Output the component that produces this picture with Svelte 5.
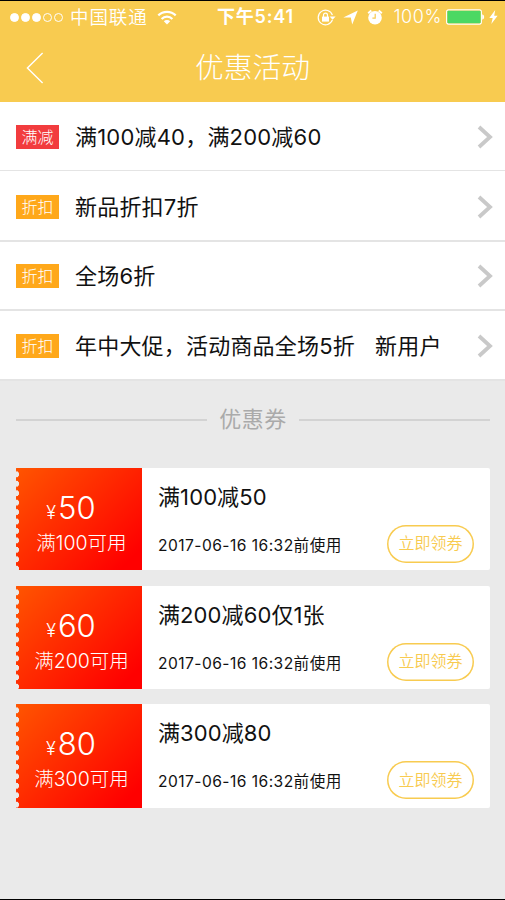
<script>
  // Promotions screen: active offers on top, claimable coupons below.
  const promotions = [
    { tag: '满减', kind: 'reduce', text: '满100减40，满200减60' },
    { tag: '折扣', kind: 'discount', text: '新品折扣7折' },
    { tag: '折扣', kind: 'discount', text: '全场6折' },
    { tag: '折扣', kind: 'discount', text: '年中大促，活动商品全场5折', extra: '新用户' },
  ];

  const coupons = [
    { amount: 50, condition: '满100可用', title: '满100减50', expires: '2017-06-16 16:32前使用' },
    { amount: 60, condition: '满200可用', title: '满200减60仅1张', expires: '2017-06-16 16:32前使用' },
    { amount: 80, condition: '满300可用', title: '满300减80', expires: '2017-06-16 16:32前使用' },
  ];

  const signal = [true, true, true, false, false];
</script>

<div class="screen">
  <header>
    <div class="status">
      <div class="side">
        <span class="signal">
          {#each signal as on}
            <i class:on></i>
          {/each}
        </span>
        <span class="carrier">中国联通</span>
        <svg class="wifi" width="20" height="15" viewBox="0 0 20 15" fill="none" stroke="#fff" stroke-width="2.2">
          <path d="M1.3 5.4a12.3 12.3 0 0 1 17.4 0" />
          <path d="M4.6 8.9a7.6 7.6 0 0 1 10.8 0" />
          <path d="M10 14.6l-3.2-3.3a4.6 4.6 0 0 1 6.4 0z" fill="#fff" stroke="none" />
        </svg>
      </div>
      <span class="time">下午5:41</span>
      <div class="side right">
        <svg width="19" height="17" viewBox="0 0 19 17" fill="none" stroke="#fff" stroke-width="1.2">
          <path d="M15.4 6.1a7.3 7.3 0 1 0 0 4.8" />
          <path d="M12.6 7.4h6l-3 3.4z" fill="#fff" stroke="none" />
          <path d="M6.5 8V6.2a2 2 0 0 1 4 0V8" />
          <rect x="5" y="7.6" width="7" height="5" fill="#fff" stroke="none" />
        </svg>
        <svg class="location" width="15" height="15" viewBox="0 0 15 15" fill="#fff">
          <path d="M14.8.4L9.2 14.6 7.8 7.6.3 7.4z" />
        </svg>
        <svg class="alarm" width="16" height="16" viewBox="0 0 16 16" fill="none">
          <circle cx="8" cy="8.7" r="6.8" fill="#fff" />
          <path d="M1.2 4.2L4.3 1.5M14.8 4.2l-3.1-2.7" stroke="#fff" stroke-width="2" />
          <path d="M8.2 4.8v4.3H5.4" stroke="#f8cb50" stroke-width="1.2" />
        </svg>
        <span class="percent">100%</span>
        <svg class="battery" width="39" height="16" viewBox="0 0 39 16">
          <rect x=".6" y=".9" width="34.8" height="14.2" rx="2" fill="none" stroke="#fff" stroke-width="1.1" />
          <rect x="1.4" y="1.8" width="33.2" height="12.4" rx="1" fill="#4bd863" />
          <path d="M36.2 5.2q2 .6 2 2.8t-2 2.8z" fill="#fff" />
        </svg>
        <svg class="bolt" width="9" height="14" viewBox="0 0 9 14" fill="#fff">
          <path d="M6.2 0L.3 7.9h3.4L2.3 14l6.3-8.2H5.2z" />
        </svg>
      </div>
    </div>
    <div class="nav">
      <button class="back" type="button" aria-label="返回">
        <svg width="18" height="32" viewBox="0 0 18 32" fill="none" stroke="#fff" stroke-width="1.4">
          <path d="M16.6 1L1.4 16l15.2 15" />
        </svg>
      </button>
      <h1>优惠活动</h1>
    </div>
  </header>

  <ul class="promotions">
    {#each promotions as promo}
      <li>
        <span class="tag {promo.kind}">{promo.tag}</span>
        <span class="text">{promo.text}</span>
        {#if promo.extra}<span class="text extra">{promo.extra}</span>{/if}
        <svg class="chevron" width="16" height="24" viewBox="0 0 16 24" fill="none" stroke="#c9c9c9" stroke-width="3.8">
          <path d="M2 2l11 10L2 22" />
        </svg>
      </li>
    {/each}
  </ul>

  <div class="divider"><span>优惠券</span></div>

  <div class="coupons">
    {#each coupons as coupon}
      <article>
        <div class="value">
          <div class="amount"><small>¥</small>{coupon.amount}</div>
          <div class="condition">{coupon.condition}</div>
        </div>
        <div class="details">
          <h2>{coupon.title}</h2>
          <div class="foot">
            <span class="expires">{coupon.expires}</span>
            <button class="claim" type="button">立即领券</button>
          </div>
        </div>
      </article>
    {/each}
  </div>
</div>

<style>
  :global(body) {
    background: #eaeaea;
  }

  .screen {
    box-sizing: border-box;
    height: 900px;
    border-top: 1px solid #000;
    border-bottom: 1px solid #000;
    background: #eaeaea;
    color: #111;
    font-family: Inter, 'Noto Sans CJK SC', sans-serif;
    overflow: hidden;
  }

  header {
    height: 101px;
    background: #f8cb50;
    color: #fff;
  }

  .status {
    display: grid;
    grid-template-columns: 217px auto 1fr;
    align-items: center;
    height: 32px;
    line-height: 32px;
    font-size: 18px;
    white-space: nowrap;
  }

  .side {
    display: flex;
    align-items: center;
    padding-left: 10px;
  }

  .right {
    justify-content: flex-end;
    padding: 0 7px 0 0;
  }

  .signal {
    display: flex;
    gap: 2px;
    width: 60px;
  }

  .signal i {
    box-sizing: border-box;
    width: 9px;
    height: 9px;
    border: 1px solid #fff;
    border-radius: 50%;
  }

  .signal i.on {
    background: #fff;
  }

  .carrier {
    font-size: 18.5px;
    font-weight: 350;
    letter-spacing: 0.9px;
  }

  .wifi {
    margin-left: 9px;
  }

  .time {
    font-weight: 600;
    font-size: 18px;
    letter-spacing: 0.8px;
  }

  .location {
    margin-left: 7px;
  }

  .alarm {
    margin-left: 9px;
  }

  .percent {
    margin-left: 10px;
    font-weight: 300;
    letter-spacing: 0.6px;
  }

  .battery {
    margin-left: 4px;
  }

  .bolt {
    margin-left: 4px;
  }

  .nav {
    display: grid;
    grid-template-columns: 60px 1fr 60px;
    align-items: center;
    height: 69px;
  }

  button {
    padding: 0;
    border: 0;
    background: none;
    font: inherit;
  }

  .back {
    display: flex;
    padding-left: 26px;
  }

  h1 {
    margin: 1px 0 0;
    text-align: center;
    font-size: 28.8px;
    line-height: 40px;
    font-weight: 300;
  }

  .promotions {
    margin: 0;
    padding: 0;
    list-style: none;
    background: #fff;
  }

  .promotions li {
    box-sizing: border-box;
    display: flex;
    align-items: center;
    height: 70px;
    padding: 2px 12px 0 16px;
    border-bottom: 2px solid #e4e4e4;
  }

  .promotions li:first-child {
    height: 69px;
    border-bottom-width: 1px;
  }

  .promotions li:nth-child(2) {
    height: 71px;
  }

  .promotions li:nth-child(3) {
    height: 69px;
    padding-top: 1px;
  }

  .tag {
    width: 43px;
    height: 24px;
    margin-right: 16px;
    color: #fff;
    font-size: 16px;
    font-weight: 300;
    line-height: 24px;
    text-align: center;
  }

  .reduce {
    background: #f23c3e;
  }

  .discount {
    background: #ffa81a;
  }

  .text {
    font-size: 22px;
    line-height: 30px;
    letter-spacing: 0.2px;
    white-space: nowrap;
  }

  .extra {
    margin-left: 20px;
  }

  .chevron {
    margin-left: auto;
  }

  .divider {
    display: flex;
    align-items: center;
    gap: 12px;
    height: 78px;
    padding: 0 15px 0 16px;
    color: #aaa;
    font-size: 22px;
    line-height: 30px;
    letter-spacing: 0.5px;
  }

  .divider span {
    padding-bottom: 3px;
  }

  .divider::before,
  .divider::after {
    content: '';
    flex: 1;
    height: 2px;
    background: #d3d3d3;
  }

  .coupons {
    display: grid;
    gap: 15.6px;
    padding: 8.6px 15px 0 16px;
  }

  article {
    display: flex;
    height: 102.8px;
    background: #fff;
    border-radius: 0 2px 2px 0;
  }

  article:last-child {
    height: 103.4px;
  }

  /* Orange-to-red stub, with a column of notches punched along its left edge. */
  .value {
    box-sizing: border-box;
    width: 126px;
    padding: 22px 0 0 5px;
    background:
      radial-gradient(circle at 0 50%, #eaeaea 2.8px, transparent 3.4px) 0 1.6px / 4px 9.45px repeat-y,
      linear-gradient(135deg, #ff5500, #ff0000 90%);
    color: #fff;
    text-align: center;
  }

  .amount {
    padding-right: 21px;
    font-size: 31px;
    line-height: 36px;
    font-weight: 350;
  }

  .amount small {
    margin-right: 2px;
    font-size: 18px;
  }

  .condition {
    margin-top: -2px;
    font-size: 19.5px;
    line-height: 28px;
    font-weight: 300;
  }

  .details {
    flex: 1;
    padding: 14px 16px 0;
  }

  h2 {
    margin: 0;
    font-size: 22px;
    line-height: 30px;
    font-weight: 400;
    letter-spacing: 0.1px;
  }

  .foot {
    display: flex;
    justify-content: space-between;
    align-items: center;
    margin-top: 13px;
  }

  .expires {
    font-size: 15.6px;
    letter-spacing: 0.45px;
    white-space: nowrap;
  }

  .claim {
    width: 87px;
    height: 38px;
    box-shadow: inset 0 0 0 1.5px #f8cb50;
    border-radius: 19px;
    color: #f8cb50;
    font-size: 16px;
    font-weight: 350;
    line-height: 37px;
  }
</style>
